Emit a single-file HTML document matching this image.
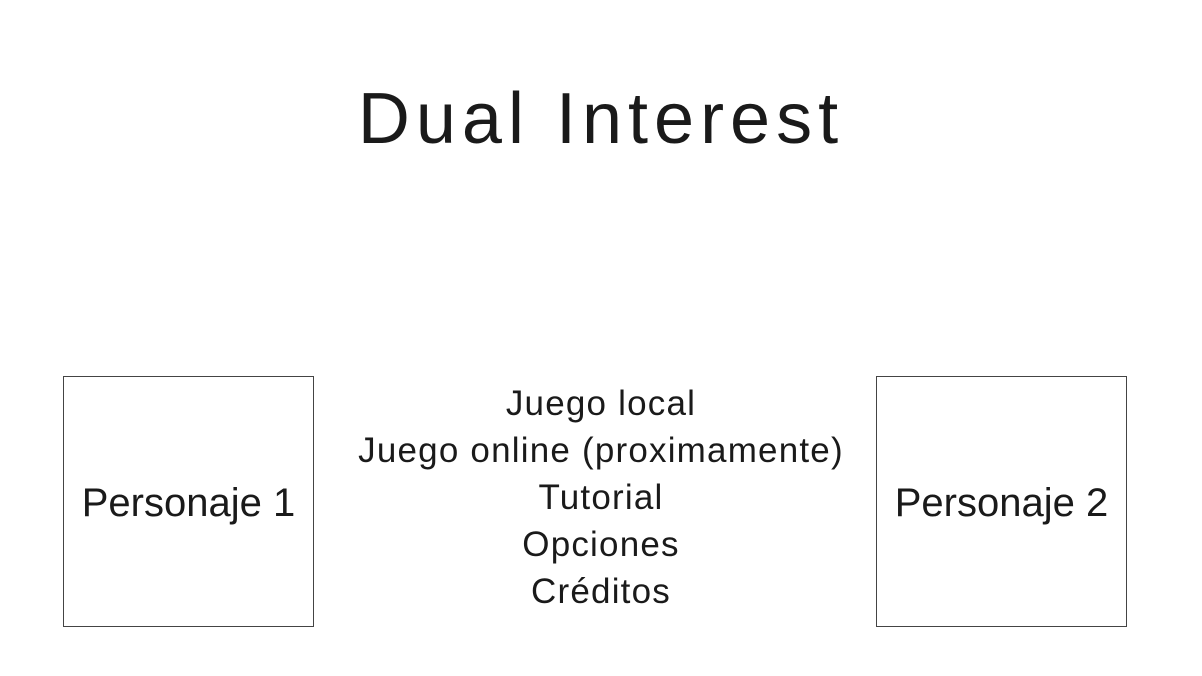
<!DOCTYPE html>
<html><head><meta charset="utf-8"><style>
html,body{margin:0;padding:0;background:#fff;}
body{width:1202px;height:676px;position:relative;overflow:hidden;font-family:"Liberation Sans",sans-serif;color:#1a1a1a;}
.title{position:absolute;left:0;width:1202px;top:78px;text-align:center;font-size:72px;letter-spacing:6px;}
.box{position:absolute;top:376px;width:251px;height:251px;border:1px solid #444;box-sizing:border-box;display:flex;align-items:center;justify-content:center;font-size:40px;}
.menu{position:absolute;left:0;width:1202px;top:380px;text-align:center;font-size:35px;line-height:47px;letter-spacing:1.2px;}
</style></head><body>
<div class="title">Dual Interest</div>
<div class="box" style="left:63px;padding-top:4px;">Personaje 1</div>
<div class="box" style="left:876px;padding-top:4px;">Personaje 2</div>
<div class="menu">
<div>Juego local</div>
<div>Juego online (proximamente)</div>
<div>Tutorial</div>
<div>Opciones</div>
<div>Créditos</div>
</div>
</body></html>
